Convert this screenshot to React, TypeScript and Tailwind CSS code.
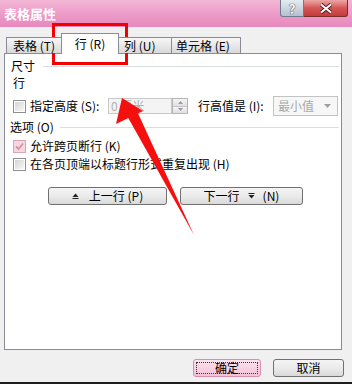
import React from "react";

const Check = ({ checked = false }: { checked?: boolean }) =>
  checked ? (
    <div className="w-[13px] h-[13px] border border-[#d6a6b4] bg-[#f6d7e0] flex items-center justify-center shrink-0">
      <svg width="9" height="9" viewBox="0 0 9 9">
        <path d="M1 4.5 L3.5 7 L8 1.5" stroke="#d88fa3" strokeWidth="1.8" fill="none" />
      </svg>
    </div>
  ) : (
    <div className="w-[13px] h-[13px] border border-[#8e8f8f] bg-white p-[1px] shrink-0">
      <div className="w-full h-full bg-gradient-to-br from-[#d5d5d5] to-[#f7f7f7]" />
    </div>
  );

const Btn = ({ children, className = "" }: { children: React.ReactNode; className?: string }) => (
  <div
    className={
      "h-[18px] rounded-[3px] border border-[#707070] bg-gradient-to-b from-[#f4f4f4] via-[#ebebeb] to-[#d9d9d9] flex items-center justify-center leading-none " +
      className
    }
  >
    {children}
  </div>
);

export default function App() {
  return (
    <div className="relative w-[352px] h-[384px] bg-[#f0f0f0] overflow-hidden flex flex-col text-[12px] text-black font-['Noto_Sans_CJK_SC','Noto_Sans',sans-serif] leading-none">
      {/* title bar */}
      <div className="h-[27px] shrink-0 flex items-start bg-gradient-to-b from-[#f3b6d6] via-[#ec9cc8] to-[#e888bd]">
        <div className="self-center pl-[4px] text-white font-bold text-[13px] tracking-[0px]">表格属性</div>
        <div className="ml-auto mr-[4px] flex">
          <div className="w-[24px] h-[17px] rounded-bl-[3px] border border-t-0 border-[#6f7b8c] bg-gradient-to-b from-[#e4eaf1] to-[#b5c1d0] flex items-center justify-center text-white font-bold text-[13px] [text-shadow:0_0_1px_#333,0_0_1px_#333]">
            ?
          </div>
          <div className="w-[44px] h-[17px] rounded-br-[3px] border border-l-0 border-t-0 border-[#7a2b2b] bg-gradient-to-b from-[#eba6a6] via-[#d55656] to-[#c43a3a] flex items-center justify-center">
            <svg width="14" height="11" viewBox="0 0 14 11">
              <path d="M2 1.5 L12 9.5 M12 1.5 L2 9.5" stroke="#5a2020" strokeWidth="4" />
              <path d="M2 1.5 L12 9.5 M12 1.5 L2 9.5" stroke="#ffffff" strokeWidth="2" />
            </svg>
          </div>
        </div>
      </div>

      {/* tabs */}
      <div className="relative z-10 mt-[6px] ml-[6px] h-[21px] flex items-end">
        <div className="h-[16px] mb-[1px] w-[56px] border border-b-0 border-[#898c95] bg-gradient-to-b from-[#f7f7f7] to-[#d9d9d9] flex items-center pl-[6px]">
          表格 (T)
        </div>
        <div className="h-[21px] w-[58px] border border-b-0 border-[#898c95] bg-white flex items-center justify-center -ml-[1px]">
          行 (R)
        </div>
        <div className="h-[16px] mb-[1px] w-[53px] border border-l-0 border-b-0 border-[#898c95] bg-gradient-to-b from-[#f7f7f7] to-[#d9d9d9] flex items-center pl-[5px]">
          列 (U)
        </div>
        <div className="h-[16px] mb-[1px] w-[69px] border border-l-0 border-b-0 border-[#898c95] bg-gradient-to-b from-[#f7f7f7] to-[#d9d9d9] flex items-center pl-[4px]">
          单元格 (E)
        </div>
      </div>

      {/* panel */}
      <div className="-mt-[1px] ml-[4px] w-[338px] h-[297px] shrink-0 border border-[#898c95] bg-white flex flex-col">
        <div className="mt-[5px] h-[14px] flex items-center pl-[6px]">
          <span>尺寸</span>
          <div className="flex-1 ml-[8px] mr-[2px] border-t border-[#d5dfe5]" />
        </div>
        <div className="mt-[3px] h-[14px] flex items-center pl-[8px]">行</div>
        <div className="mt-[6px] h-[20px] flex items-center pl-[8px]">
          <Check />
          <span className="ml-[4px] w-[78px]">指定高度 (S):</span>
          <div className="w-[64px] h-[16px] border border-[#c9c9c9] bg-[#f4f4f4] flex items-center pl-[2px] text-[#b0b0b0]">
            0 厘米
          </div>
          <div className="w-[16px] h-[16px] border border-[#b5b5b5] flex flex-col">
            <div className="flex-1 bg-gradient-to-b from-[#f4f4f4] to-[#e0e0e0] flex items-center justify-center border-b border-[#c5c5c5]">
              <svg width="5" height="3" viewBox="0 0 5 3"><path d="M0 3 L2.5 0 L5 3Z" fill="#9a9aa8" /></svg>
            </div>
            <div className="flex-1 bg-gradient-to-b from-[#f4f4f4] to-[#e0e0e0] flex items-center justify-center">
              <svg width="5" height="3" viewBox="0 0 5 3"><path d="M0 0 L2.5 3 L5 0Z" fill="#a58fb0" /></svg>
            </div>
          </div>
          <span className="ml-[10px] w-[75px]">行高值是 (I):</span>
          <div className="w-[65px] h-[20px] border border-[#c3c3c3] bg-[#f7f7f7] flex items-center pl-[4px] text-[#a8a8a8]">
            <span>最小值</span>
            <svg className="ml-auto mr-[6px]" width="7" height="4" viewBox="0 0 7 4"><path d="M0 0 L3.5 4 L7 0Z" fill="#a0a0a0" /></svg>
          </div>
        </div>
        <div className="mt-[4px] h-[14px] flex items-center pl-[5px]">
          <span>选项 (O)</span>
          <div className="flex-1 ml-[6px] mr-[2px] border-t border-[#d5dfe5]" />
        </div>
        <div className="mt-[5px] h-[14px] flex items-center pl-[8px]">
          <Check checked />
          <span className="ml-[4px]">允许跨页断行 (K)</span>
        </div>
        <div className="mt-[4px] h-[14px] flex items-center pl-[8px]">
          <Check />
          <span className="ml-[4px]">在各页顶端以标题行形式重复出现 (H)</span>
        </div>
        <div className="mt-[16px] flex">
          <Btn className="ml-[43px] w-[119px]">
            <svg width="7" height="6" viewBox="0 0 7 6" className="mr-[10px]">
              <path d="M0.5 4 L3.5 0.5 L6.5 4Z" fill="#222" />
              <rect x="0.5" y="5" width="6" height="1" fill="#222" />
            </svg>
            <span>上一行 (P)</span>
          </Btn>
          <Btn className="ml-[13px] w-[123px]">
            <span>下一行</span>
            <svg width="7" height="6" viewBox="0 0 7 6" className="mx-[8px]">
              <rect x="0.5" y="0" width="6" height="1" fill="#222" />
              <path d="M0.5 2 L3.5 5.5 L6.5 2Z" fill="#222" />
            </svg>
            <span>(N)</span>
          </Btn>
        </div>
      </div>

      {/* bottom buttons */}
      <div className="mt-[9px] flex justify-end pr-[8px]">
        <div className="w-[68px] h-[18px] rounded-[3px] border border-[#d88fab] bg-gradient-to-b from-[#fbe3ee] to-[#f2c2d6] p-[2px]">
          <div className="w-full h-full border border-dotted border-[#333] flex items-center justify-center">确定</div>
        </div>
        <Btn className="ml-[12px] w-[71px]">取消</Btn>
      </div>
      <div className="mt-auto h-[2px] bg-[#1e1e1e]" />

      {/* annotations */}
      <div className="absolute left-[52px] top-[23px] w-[76px] h-[42px] border-[3px] border-[#f40000]" />
      <svg className="absolute left-0 top-0 pointer-events-none" width="352" height="384" viewBox="0 0 352 384">
        <polygon points="122,98 116,124 143,111" fill="#f51010" />
        <polygon points="126,114 136,109 194,235" fill="#f51010" />
      </svg>
    </div>
  );
}
